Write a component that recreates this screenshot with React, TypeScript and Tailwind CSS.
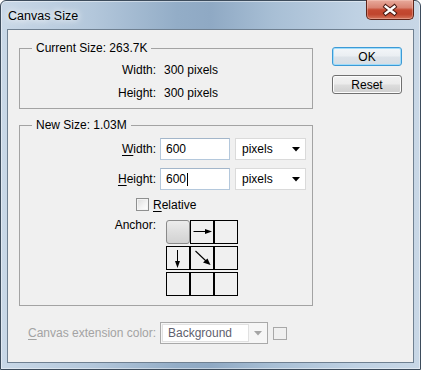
import React from "react";

function Cell({ children, selected }: { children?: React.ReactNode; selected?: boolean }) {
  if (selected) {
    return (
      <div className="h-[24px] w-[24px] rounded-[3px] border border-[#8a8a8a] bg-[linear-gradient(180deg,#ececec_0%,#dedede_50%,#d2d2d2_100%)]" />
    );
  }
  return <div className="h-[24px] w-[24px] border border-black">{children}</div>;
}

export default function App() {
  return (
    <div className="h-[370px] w-[421px] overflow-hidden bg-white font-['Liberation_Sans',Arial,sans-serif] text-[12px] text-black">
      <div className="flex h-full flex-col rounded-t-[6px] border border-[#3d4c5c] bg-[linear-gradient(90deg,#c9d8e7_0%,#b3c7db_22%,#93adc7_42%,#8fa9c4_50%,#a8bfd5_65%,#bfd1e3_85%,#c8d7e6_100%)] shadow-[inset_0_0_0_1px_rgba(255,255,255,0.45)]">
        {/* title bar */}
        <div className="flex h-[28px] items-start justify-between">
          <div className="pl-[7px] pt-[7px] leading-[16px] text-[12.5px] text-black [text-shadow:0_0_6px_#ffffff,0_0_10px_#ffffff]">
            Canvas Size
          </div>
          <div className="mr-[6px] mt-[-1px] flex h-[20px] w-[48px] items-center justify-center rounded-b-[5px] border border-t-0 border-[#5e2419] bg-[linear-gradient(180deg,#e8aa9c_0%,#d98473_40%,#c54a32_52%,#c0452d_75%,#d4745b_100%)] shadow-[inset_0_0_0_1px_rgba(255,220,210,0.35)]">
            <svg width="48" height="20" viewBox="0 0 48 20">
              <path d="M19.5 6.5 L28.5 13.5 M28.5 6.5 L19.5 13.5" stroke="#4a1a12" strokeWidth="4.6" strokeLinecap="square" />
              <path d="M19.5 6.5 L28.5 13.5 M28.5 6.5 L19.5 13.5" stroke="#ffffff" strokeWidth="2.6" strokeLinecap="square" />
            </svg>
          </div>
        </div>

        {/* client area */}
        <div className="mx-[6px] mb-[6px] flex flex-1 flex-col border border-[#6f8091] bg-[#f0f0f0]">
          <div className="flex pl-[11px]">
            {/* left column */}
            <div className="w-[294px] pt-[11px]">
              <fieldset className="border border-[#a3a3a3] px-0 pb-[7px] pt-[7px]">
                <legend className="ml-[12px] px-[4px] leading-[14px]">Current Size: 263.7K</legend>
                <div className="flex flex-col gap-[7px] leading-[16px]">
                  <div className="flex">
                    <div className="w-[136px] text-right">Width:</div>
                    <div className="ml-[8px]">300 pixels</div>
                  </div>
                  <div className="flex">
                    <div className="w-[136px] text-right">Height:</div>
                    <div className="ml-[8px]">300 pixels</div>
                  </div>
                </div>
              </fieldset>

              <fieldset className="mt-[9px] border border-[#a3a3a3] px-0 pb-[9px] pt-[6px]">
                <legend className="ml-[12px] px-[4px] leading-[14px]">New Size: 1.03M</legend>
                <div className="flex h-[22px] items-center">
                  <div className="w-[136px] text-right">
                    <span className="underline underline-offset-2">W</span>idth:
                  </div>
                  <div className="ml-[4px] flex h-[22px] w-[70px] items-center border border-[#b4c8dc] border-t-[#a3b6ca] bg-white pl-[5px]">
                    600
                  </div>
                  <div className="ml-[5px] flex h-[22px] w-[71px] items-center justify-between border border-[#dadada] bg-white pl-[6px] pr-[5px]">
                    <span>pixels</span>
                    <svg width="8" height="5" viewBox="0 0 8 5">
                      <path d="M0 0 H8 L4 4.5 Z" fill="#000" />
                    </svg>
                  </div>
                </div>
                <div className="mt-[8px] flex h-[22px] items-center">
                  <div className="w-[136px] text-right">
                    <span className="underline underline-offset-2">H</span>eight:
                  </div>
                  <div className="ml-[4px] flex h-[22px] w-[70px] items-center border border-[#b4c8dc] border-t-[#a3b6ca] bg-white pl-[5px]">
                    600
                    <span className="ml-px inline-block h-[13px] w-px bg-black" />
                  </div>
                  <div className="ml-[5px] flex h-[22px] w-[71px] items-center justify-between border border-[#dadada] bg-white pl-[6px] pr-[5px]">
                    <span>pixels</span>
                    <svg width="8" height="5" viewBox="0 0 8 5">
                      <path d="M0 0 H8 L4 4.5 Z" fill="#000" />
                    </svg>
                  </div>
                </div>
                <div className="mt-[8px] flex h-[13px] items-center">
                  <div className="ml-[116px] h-[13px] w-[13px] border border-[#8e8f8f] bg-[linear-gradient(135deg,#dcdcdc_0%,#f4f4f4_60%,#ffffff_100%)] shadow-[inset_0_0_0_1px_#f4f4f4]" />
                  <div className="ml-[4px] leading-[14px]">
                    <span className="underline underline-offset-2">R</span>elative
                  </div>
                </div>
                <div className="mt-[9px] flex items-start">
                  <div className="mt-[-3px] w-[136px] text-right leading-[16px]">Anchor:</div>
                  <div className="ml-[10px] grid grid-cols-[24px_24px_24px] gap-y-[2px]">
                    <Cell selected />
                    <Cell>
                      <svg width="22" height="22" viewBox="0 0 22 22">
                        <path d="M2.5 10.5 H16" stroke="#000" strokeWidth="1" />
                        <path d="M14 8 L21 10.5 L14 13 Z" fill="#000" />
                      </svg>
                    </Cell>
                    <Cell />
                    <Cell>
                      <svg width="22" height="22" viewBox="0 0 22 22">
                        <path d="M10.5 3 V16" stroke="#000" strokeWidth="1" />
                        <path d="M8 14 L10.5 21 L13 14 Z" fill="#000" />
                      </svg>
                    </Cell>
                    <Cell>
                      <svg width="22" height="22" viewBox="0 0 22 22">
                        <path d="M4.5 4 L15 14" stroke="#000" strokeWidth="1.1" />
                        <path d="M12 15.5 L19.5 18 L16.5 11.5 Z" fill="#000" />
                      </svg>
                    </Cell>
                    <Cell />
                    <Cell />
                    <Cell />
                    <Cell />
                  </div>
                </div>
              </fieldset>
            </div>

            {/* right column: buttons */}
            <div className="ml-[19px] flex w-[70px] flex-col gap-[9px] pt-[17px]">
              <div className="flex h-[19px] items-center justify-center rounded-[3px] border border-[#3c9ad6] bg-[linear-gradient(180deg,#f3f6f9_0%,#eaeef2_48%,#dde3e9_52%,#d6dde4_100%)] leading-[14px] shadow-[inset_0_0_0_1px_#9fdcfa]">
                OK
              </div>
              <div className="flex h-[19px] items-center justify-center rounded-[3px] border border-[#707070] bg-[linear-gradient(180deg,#f2f2f2_0%,#ebebeb_48%,#dddddd_52%,#cfcfcf_100%)] leading-[14px] shadow-[inset_0_0_0_1px_#fcfcfc]">
                Reset
              </div>
            </div>
          </div>

          {/* bottom row */}
          <div className="mt-[16px] flex items-center pl-[20px]">
            <div className="w-[132px] shrink-0 whitespace-nowrap text-[#a3a3a3]">
              <span className="underline underline-offset-2">C</span>anvas extension color:
            </div>
            <div className="flex h-[22px] w-[108px] shrink-0 items-center border border-[#a9a9a9] bg-[#f6f6f6] p-px">
              <div className="flex h-full w-[87px] items-center border border-[#e1e1e1] bg-white pl-[5px] text-[#5f5f6e]">
                Background
              </div>
              <div className="flex flex-1 items-center justify-center">
                <svg width="8" height="5" viewBox="0 0 8 5">
                  <path d="M0 0 H8 L4 4.5 Z" fill="#a5a5a5" />
                </svg>
              </div>
            </div>
            <div className="ml-[5px] h-[13px] w-[14px] shrink-0 border border-[#a8a8a8]" />
          </div>
        </div>
      </div>
    </div>
  );
}
